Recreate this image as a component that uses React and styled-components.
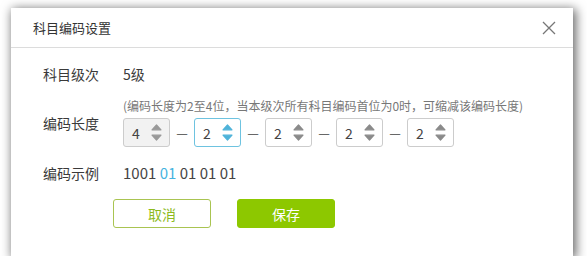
import React, { useState } from "react";
import styled, { createGlobalStyle } from "styled-components";

const GlobalStyle = createGlobalStyle`
  html, body {
    margin: 0;
    padding: 0;
    background: #ffffff;
  }
  body {
    font-family: "Noto Sans CJK SC", "Noto Sans", sans-serif;
    color: #333;
  }
`;

const Dialog = styled.div`
  margin: 8px 0 0 11px;
  width: 562px;
  height: 248px;
  background: #fff;
  box-shadow: 2px 2px 10px 1px rgba(0, 0, 0, 0.6);
  display: flex;
  flex-direction: column;
`;

const Header = styled.div`
  height: 40px;
  padding: 0 16px 0 22px;
  display: flex;
  align-items: center;
  justify-content: space-between;
  border-bottom: 1px solid #dcdcdc;
  box-sizing: border-box;
`;

const Title = styled.h3`
  margin: 0;
  font-size: 13px;
  font-weight: normal;
  color: #333;
`;

const Close = styled.button`
  width: 16px;
  height: 16px;
  padding: 0;
  border: none;
  background: none;
  display: flex;
  align-items: center;
  justify-content: center;
  cursor: pointer;
`;

const Body = styled.div`
  padding: 0 32px;
`;

const Row = styled.div`
  display: grid;
  grid-template-columns: 80px 1fr;
  align-items: center;
  margin-top: ${({ $top }) => $top}px;
`;

const Label = styled.span`
  font-size: 14px;
  color: #3a3a3a;
  line-height: 24px;
`;

const Value = styled.span`
  font-size: 14px;
  color: #3a3a3a;
  line-height: 24px;
`;

const Hint = styled.div`
  font-size: 12px;
  line-height: 16px;
  color: #777;
  white-space: nowrap;
`;

const Spinners = styled.div`
  display: flex;
  align-items: center;
  margin-top: 4px;
`;

const Dash = styled.span`
  width: 24px;
  text-align: center;
  font-size: 13px;
  color: #444;
`;

const Spinner = styled.div`
  width: 47px;
  height: 29px;
  box-sizing: border-box;
  border: 1px solid ${({ $active }) => ($active ? "#6ec3e0" : "#cccccc")};
  border-radius: 3px;
  background: ${({ $disabled }) => ($disabled ? "#f2f2f2" : "#fff")};
  display: flex;
  align-items: center;
  justify-content: space-between;
  padding: 0 7px 0 8px;
`;

const Num = styled.span`
  font-size: 14px;
  color: #444;
`;

const Arrows = styled.div`
  display: flex;
  flex-direction: column;
  gap: 3px;
`;

const Sample = styled(Value)`
  color: #444;
  font-size: 15px;
`;

const Blue = styled.span`
  color: #45b3e0;
`;

const Buttons = styled.div`
  display: flex;
  gap: 26px;
  margin: 14px 0 0 70px;
`;

const Button = styled.button`
  width: 98px;
  height: 29px;
  box-sizing: border-box;
  border-radius: 3px;
  font-family: inherit;
  font-size: 14px;
  cursor: pointer;
  border: 1px solid ${({ $primary }) => ($primary ? "#8dc800" : "#a9c451")};
  background: ${({ $primary }) => ($primary ? "#8dc800" : "#fff")};
  color: ${({ $primary }) => ($primary ? "#fff" : "#8dba1c")};
`;

const Arrow = ({ down, color }) => (
  <svg width="11" height="7" viewBox="0 0 11 7">
    <path
      d={down ? "M1 1.2 L10 1.2 L5.5 6 Z" : "M1 5.8 L10 5.8 L5.5 1 Z"}
      fill={color}
      stroke={color}
      strokeWidth="1.2"
      strokeLinejoin="round"
    />
  </svg>
);

const NumberBox = ({ value, active, disabled }) => {
  const c = active ? "#4fb3d9" : disabled ? "#999" : "#8a8a8a";
  return (
    <Spinner $active={active} $disabled={disabled}>
      <Num>{value}</Num>
      <Arrows>
        <Arrow color={c} />
        <Arrow down color={c} />
      </Arrows>
    </Spinner>
  );
};

const App = () => {
  const [lengths] = useState([4, 2, 2, 2, 2]);

  return (
    <>
      <GlobalStyle />
      <Dialog>
        <Header>
          <Title>科目编码设置</Title>
          <Close aria-label="关闭">
            <svg width="14" height="14" viewBox="0 0 14 14">
              <path d="M1 1 L13 13 M13 1 L1 13" stroke="#777" strokeWidth="1.3" />
            </svg>
          </Close>
        </Header>
        <Body>
          <Row $top={14}>
            <Label>科目级次</Label>
            <Value>5级</Value>
          </Row>
          <Row $top={12}>
            <Label>编码长度</Label>
            <div>
              <Hint>(编码长度为2至4位，当本级次所有科目编码首位为0时，可缩减该编码长度)</Hint>
              <Spinners>
                {lengths.map((n, i) => (
                  <React.Fragment key={i}>
                    {i > 0 && <Dash>—</Dash>}
                    <NumberBox value={n} disabled={i === 0} active={i === 1} />
                  </React.Fragment>
                ))}
              </Spinners>
            </div>
          </Row>
          <Row $top={14}>
            <Label>编码示例</Label>
            <Sample>
              1001 <Blue>01</Blue> 01 01 01
            </Sample>
          </Row>
          <Buttons>
            <Button>取消</Button>
            <Button $primary>保存</Button>
          </Buttons>
        </Body>
      </Dialog>
    </>
  );
};

export default App;
